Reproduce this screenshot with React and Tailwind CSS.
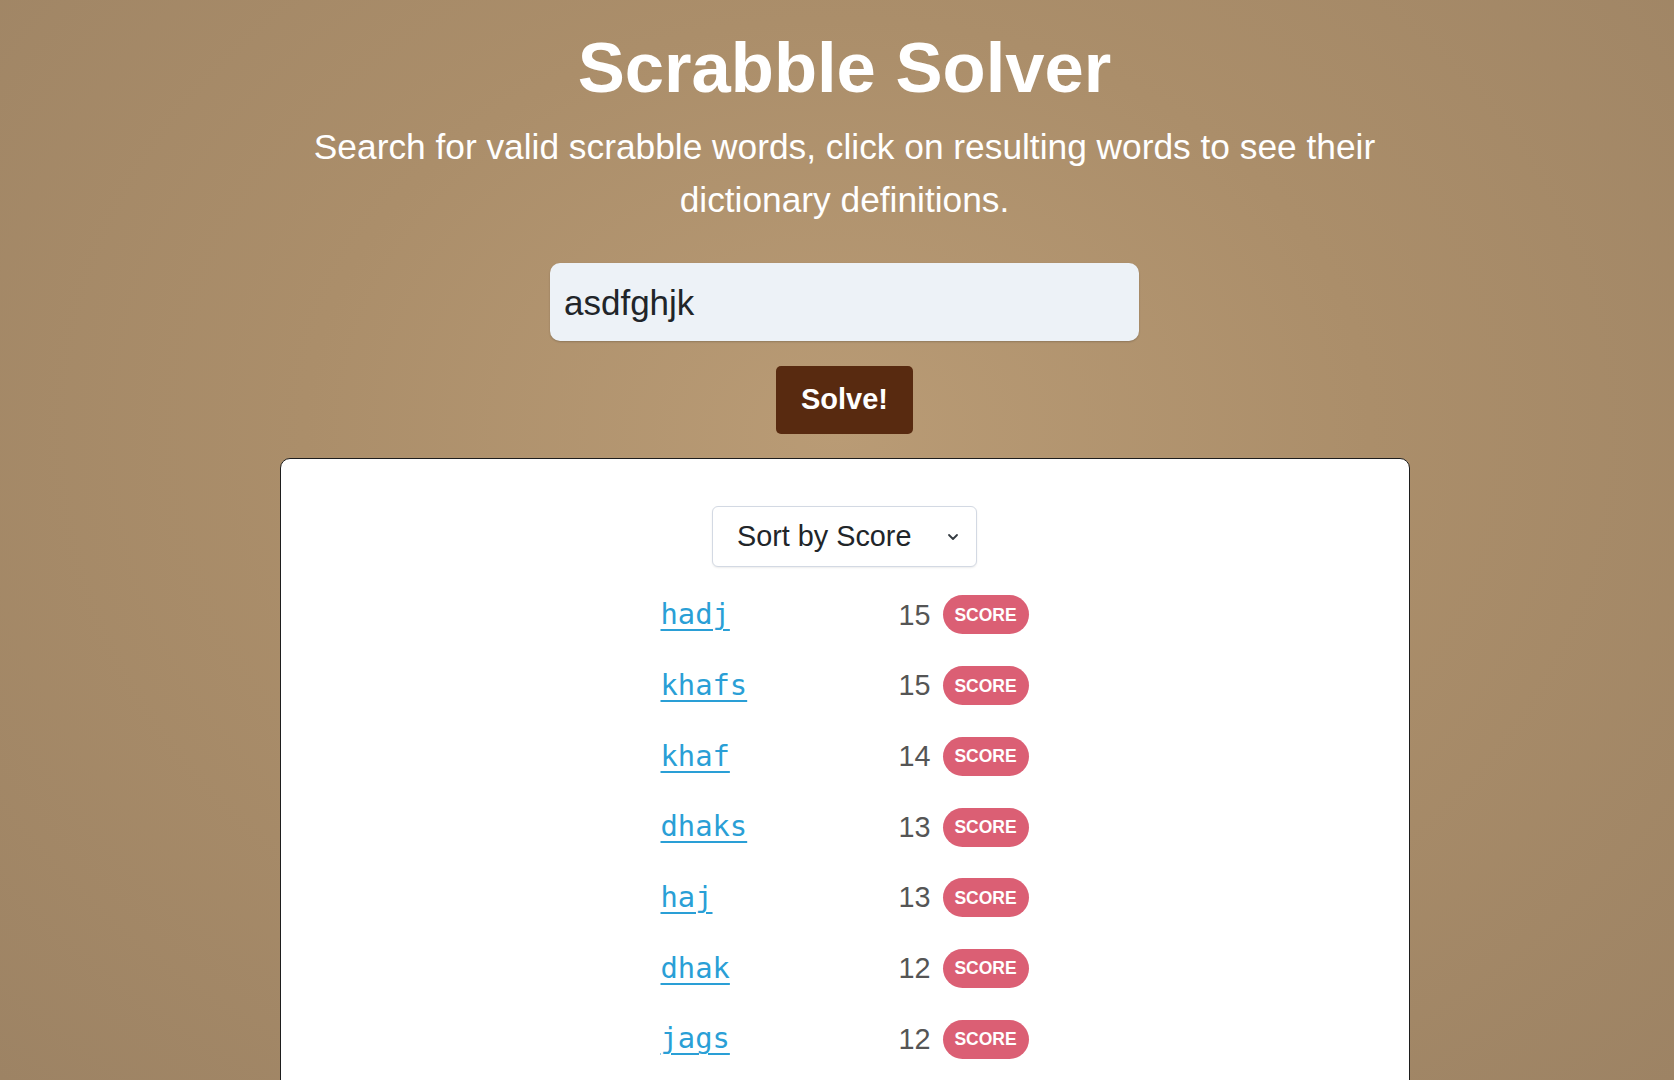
import {useState} from "react";

// Results shown for the current rack
const results = [
    {word: "hadj", score: 15},
    {word: "khafs", score: 15},
    {word: "khaf", score: 14},
    {word: "dhaks", score: 13},
    {word: "haj", score: 13},
    {word: "dhak", score: 12},
    {word: "jags", score: 12},
];

function ResultRow({word, score}) {
    return (
        <div className="flex items-center h-[70.7px] w-[368px]">
            <a
                href="#"
                className="flex-1 text-[28.8px] text-[#2a9fd6] underline underline-offset-[5px] decoration-[2px] font-['DejaVu_Sans_Mono',monospace]"
            >
                {word}
            </a>
            <span className="text-[28.8px] text-[#555555] leading-none">
                {score}
            </span>
            <span className="ml-[12px] h-[39px] w-[86px] flex items-center justify-center rounded-full bg-[#db5f74] text-white font-bold text-[17.5px]">
                SCORE
            </span>
        </div>
    );
}

export default function App() {
    const [letters, setLetters] = useState("asdfghjk");
    const [sort, setSort] = useState("score");

    return (
        <div className="min-h-screen h-[1080px] overflow-hidden bg-[radial-gradient(ellipse_at_50%_40%,#b99b75_0%,#ab8e6a_45%,#9d8364_100%)] font-['Liberation_Sans',Arial,sans-serif] pl-[15px]">
            <div className="flex flex-col items-center pt-[26px]">
                <h1 className="text-[70.6px] leading-[84px] font-bold text-white mb-[10px]">
                    Scrabble Solver
                </h1>
                <p className="max-w-[1100px] text-center text-[35.3px] leading-[53.3px] text-white">
                    Search for valid scrabble words, click on resulting words to
                    see their dictionary definitions.
                </p>

                <input
                    value={letters}
                    onChange={(e) => setLetters(e.target.value)}
                    className="mt-[36px] w-[589px] h-[78px] rounded-[10px] bg-[#edf2f7] px-[14px] pt-[2px] text-[35px] text-[#212529] outline-none shadow-[0_1px_2px_rgba(0,0,0,0.2)]"
                />

                <button className="mt-[25px] w-[137px] h-[68px] rounded-[5px] bg-[#582a10] text-white font-bold text-[29px]">
                    Solve!
                </button>

                <div className="mt-[24px] w-[1130px] bg-white border border-[#1e1e1e] rounded-[10px] pt-[47px] pb-[200px] flex flex-col items-center">
                    <div className="relative">
                        <select
                            value={sort}
                            onChange={(e) => setSort(e.target.value)}
                            className="appearance-none w-[265px] h-[61px] rounded-[6px] border border-[#d3d9e3] bg-white pl-[24px] text-[28.8px] text-[#212529] outline-none shadow-[0_1px_2px_rgba(0,0,0,0.08)]"
                        >
                            <option value="score">Sort by Score</option>
                            <option value="alpha">Sort by Word</option>
                        </select>
                        <svg
                            className="absolute right-[18px] top-[27px] pointer-events-none"
                            width="12"
                            height="8"
                            viewBox="0 0 12 8"
                            fill="none"
                        >
                            <path
                                d="M2 2l4 4 4-4"
                                stroke="#343a40"
                                strokeWidth="1.8"
                                strokeLinecap="round"
                                strokeLinejoin="round"
                            />
                        </svg>
                    </div>

                    <div className="mt-[13px] flex flex-col">
                        {results.map((r) => (
                            <ResultRow key={r.word} {...r} />
                        ))}
                    </div>
                </div>
            </div>
        </div>
    );
}
